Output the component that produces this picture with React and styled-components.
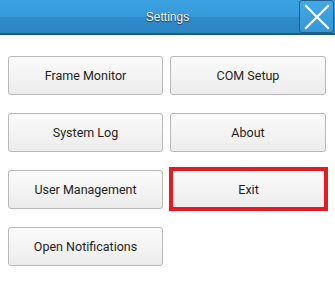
import React from "react";
import styled, { createGlobalStyle } from "styled-components";

const GlobalStyle = createGlobalStyle`
  html, body {
    margin: 0;
    padding: 0;
    background: #ffffff;
    font-family: Roboto, "Liberation Sans", Arial, sans-serif;
  }
`;

const items = [
  "Frame Monitor",
  "COM Setup",
  "System Log",
  "About",
  "User Management",
  "Exit",
  "Open Notifications",
];

export default function App() {
  return (
    <Page>
      <GlobalStyle />
      <Header>
        <Title>Settings</Title>
        <CloseButton aria-label="Close">
          <svg width="26" height="26" viewBox="0 0 26 26">
            <path
              d="M2 2 L24 24 M24 2 L2 24"
              stroke="#ffffff"
              strokeWidth="2.2"
              strokeLinecap="square"
            />
          </svg>
        </CloseButton>
      </Header>
      <Grid>
        {items.map((label) => (
          <MenuButton key={label} $active={label === "Exit"}>
            {label}
          </MenuButton>
        ))}
      </Grid>
    </Page>
  );
}

const Page = styled.div`
  width: 335px;
  height: 287px;
  background: #ffffff;
`;

const Header = styled.div`
  position: relative;
  height: 33px;
  display: flex;
  align-items: center;
  justify-content: center;
  background: linear-gradient(
    to bottom,
    #3ba1e0 0%,
    #379bdb 50%,
    #2f8bcb 51%,
    #2c86c6 100%
  );
  border-bottom: 2px solid #1d5a88;
`;

const Title = styled.div`
  color: #ffffff;
  font-family: "Liberation Sans", Arial, sans-serif;
  font-size: 12px;
  text-shadow: 0 1px 1px #1a3c5c, 0 0 1px #1a3c5c;
`;

const CloseButton = styled.button`
  position: absolute;
  top: 0;
  right: 1px;
  width: 35px;
  height: 33px;
  padding: 0;
  display: flex;
  align-items: center;
  justify-content: center;
  background: linear-gradient(to bottom, #45a8e6 0%, #3597d6 100%);
  border: 1px solid #1f5f8f;
  border-radius: 3px;
  cursor: pointer;
`;

const Grid = styled.div`
  display: grid;
  grid-template-columns: 155px 156px;
  grid-auto-rows: 39px;
  column-gap: 7px;
  row-gap: 18px;
  padding: 21px 0 0 8px;
`;

const MenuButton = styled.button`
  font-family: Roboto, "Liberation Sans", Arial, sans-serif;
  font-size: 12.5px;
  color: #1e1e1e;
  background: linear-gradient(to bottom, #fbfbfb 0%, #ececec 100%);
  border: ${(p) => (p.$active ? "4px solid #e41c1f" : "1px solid #b9b9b9")};
  border-radius: ${(p) => (p.$active ? "0" : "3px")};
  margin: ${(p) => (p.$active ? "-3px -2px -2px -1px" : "0")};
  padding: 0;
  cursor: pointer;
`;
